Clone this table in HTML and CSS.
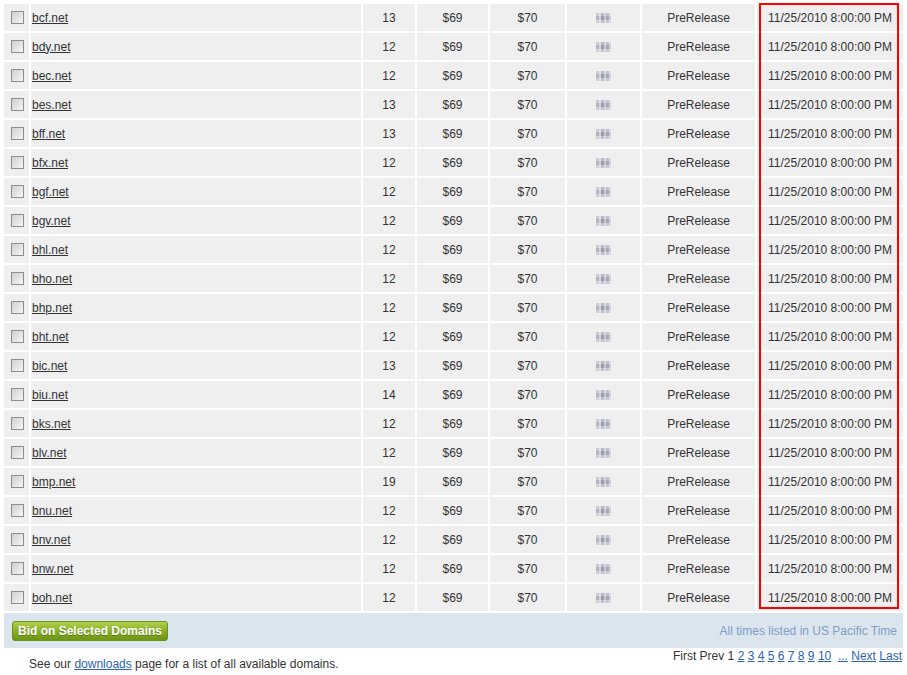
FILE: index.html
```html
<!DOCTYPE html>
<html lang="en">
<head>
  <meta charset="UTF-8">
  <title>Domain Auctions</title>
  <link rel="stylesheet" href="styles.css">
</head>
<body>
  <div class="page">
    <table class="domains">
      <colgroup>
        <col class="c-check"><col class="c-name"><col class="c-len"><col class="c-p1">
        <col class="c-p2"><col class="c-mask"><col class="c-status"><col class="c-date">
      </colgroup>
      <tbody>
        <tr><td><input type="checkbox"></td><td class="name"><a href="#">bcf.net</a></td><td>13</td><td>$69</td><td>$70</td><td><span class="mask"></span></td><td>PreRelease</td><td>11/25/2010 8:00:00 PM</td></tr>
        <tr><td><input type="checkbox"></td><td class="name"><a href="#">bdy.net</a></td><td>12</td><td>$69</td><td>$70</td><td><span class="mask"></span></td><td>PreRelease</td><td>11/25/2010 8:00:00 PM</td></tr>
        <tr><td><input type="checkbox"></td><td class="name"><a href="#">bec.net</a></td><td>12</td><td>$69</td><td>$70</td><td><span class="mask"></span></td><td>PreRelease</td><td>11/25/2010 8:00:00 PM</td></tr>
        <tr><td><input type="checkbox"></td><td class="name"><a href="#">bes.net</a></td><td>13</td><td>$69</td><td>$70</td><td><span class="mask"></span></td><td>PreRelease</td><td>11/25/2010 8:00:00 PM</td></tr>
        <tr><td><input type="checkbox"></td><td class="name"><a href="#">bff.net</a></td><td>13</td><td>$69</td><td>$70</td><td><span class="mask"></span></td><td>PreRelease</td><td>11/25/2010 8:00:00 PM</td></tr>
        <tr><td><input type="checkbox"></td><td class="name"><a href="#">bfx.net</a></td><td>12</td><td>$69</td><td>$70</td><td><span class="mask"></span></td><td>PreRelease</td><td>11/25/2010 8:00:00 PM</td></tr>
        <tr><td><input type="checkbox"></td><td class="name"><a href="#">bgf.net</a></td><td>12</td><td>$69</td><td>$70</td><td><span class="mask"></span></td><td>PreRelease</td><td>11/25/2010 8:00:00 PM</td></tr>
        <tr><td><input type="checkbox"></td><td class="name"><a href="#">bgv.net</a></td><td>12</td><td>$69</td><td>$70</td><td><span class="mask"></span></td><td>PreRelease</td><td>11/25/2010 8:00:00 PM</td></tr>
        <tr><td><input type="checkbox"></td><td class="name"><a href="#">bhl.net</a></td><td>12</td><td>$69</td><td>$70</td><td><span class="mask"></span></td><td>PreRelease</td><td>11/25/2010 8:00:00 PM</td></tr>
        <tr><td><input type="checkbox"></td><td class="name"><a href="#">bho.net</a></td><td>12</td><td>$69</td><td>$70</td><td><span class="mask"></span></td><td>PreRelease</td><td>11/25/2010 8:00:00 PM</td></tr>
        <tr><td><input type="checkbox"></td><td class="name"><a href="#">bhp.net</a></td><td>12</td><td>$69</td><td>$70</td><td><span class="mask"></span></td><td>PreRelease</td><td>11/25/2010 8:00:00 PM</td></tr>
        <tr><td><input type="checkbox"></td><td class="name"><a href="#">bht.net</a></td><td>12</td><td>$69</td><td>$70</td><td><span class="mask"></span></td><td>PreRelease</td><td>11/25/2010 8:00:00 PM</td></tr>
        <tr><td><input type="checkbox"></td><td class="name"><a href="#">bic.net</a></td><td>13</td><td>$69</td><td>$70</td><td><span class="mask"></span></td><td>PreRelease</td><td>11/25/2010 8:00:00 PM</td></tr>
        <tr><td><input type="checkbox"></td><td class="name"><a href="#">biu.net</a></td><td>14</td><td>$69</td><td>$70</td><td><span class="mask"></span></td><td>PreRelease</td><td>11/25/2010 8:00:00 PM</td></tr>
        <tr><td><input type="checkbox"></td><td class="name"><a href="#">bks.net</a></td><td>12</td><td>$69</td><td>$70</td><td><span class="mask"></span></td><td>PreRelease</td><td>11/25/2010 8:00:00 PM</td></tr>
        <tr><td><input type="checkbox"></td><td class="name"><a href="#">blv.net</a></td><td>12</td><td>$69</td><td>$70</td><td><span class="mask"></span></td><td>PreRelease</td><td>11/25/2010 8:00:00 PM</td></tr>
        <tr><td><input type="checkbox"></td><td class="name"><a href="#">bmp.net</a></td><td>19</td><td>$69</td><td>$70</td><td><span class="mask"></span></td><td>PreRelease</td><td>11/25/2010 8:00:00 PM</td></tr>
        <tr><td><input type="checkbox"></td><td class="name"><a href="#">bnu.net</a></td><td>12</td><td>$69</td><td>$70</td><td><span class="mask"></span></td><td>PreRelease</td><td>11/25/2010 8:00:00 PM</td></tr>
        <tr><td><input type="checkbox"></td><td class="name"><a href="#">bnv.net</a></td><td>12</td><td>$69</td><td>$70</td><td><span class="mask"></span></td><td>PreRelease</td><td>11/25/2010 8:00:00 PM</td></tr>
        <tr><td><input type="checkbox"></td><td class="name"><a href="#">bnw.net</a></td><td>12</td><td>$69</td><td>$70</td><td><span class="mask"></span></td><td>PreRelease</td><td>11/25/2010 8:00:00 PM</td></tr>
        <tr><td><input type="checkbox"></td><td class="name"><a href="#">boh.net</a></td><td>12</td><td>$69</td><td>$70</td><td><span class="mask"></span></td><td>PreRelease</td><td>11/25/2010 8:00:00 PM</td></tr>
      </tbody>
      <tfoot>
        <tr>
          <td colspan="8" class="actions">
            <div class="actions-row">
              <button class="bid-btn">Bid on Selected Domains</button>
              <span class="tz-note">All times listed in US Pacific Time</span>
            </div>
          </td>
        </tr>
      </tfoot>
    </table>

    <!-- highlight round the date column -->
    <div class="highlight"></div>

    <div class="below">
      <p class="note">See our <a href="#">downloads</a> page for a list of all available domains.</p>
      <div class="pager">
        First Prev 1 <a href="#">2</a> <a href="#">3</a> <a href="#">4</a> <a href="#">5</a> <a href="#">6</a> <a href="#">7</a> <a href="#">8</a> <a href="#">9</a> <a href="#">10</a>&nbsp; <a href="#">...</a> <a href="#">Next</a> <a href="#">Last</a>
      </div>
    </div>
  </div>
</body>
</html>
```

FILE: styles.css
```css
/* base */
body {
  margin: 0;
  font-family: "Liberation Sans", Arial, sans-serif;
  font-size: 12px;
  color: #333;
  background: #fff;
}
a {
  color: #2b62b2;
}

.page {
  position: relative;
  width: 907px;
  padding-top: 2px;
}

/* domain table */
.domains {
  margin-left: 2px;
  border-collapse: separate;
  border-spacing: 2px;
  table-layout: fixed;
  width: 903px;
}
.c-check { width: 25px; }
.c-name { width: 330px; }
.c-len { width: 52px; }
.c-p1 { width: 71px; }
.c-p2 { width: 75px; }
.c-mask { width: 73px; }
.c-status { width: 113px; }
.c-date { width: 146px; }

.domains tbody td {
  height: 27px;
  padding: 0;
  background: #efefef;
  text-align: center;
  vertical-align: middle;
  white-space: nowrap;
}
.domains td.name {
  text-align: left;
  padding-left: 1px;
}
.domains td.name a {
  color: #333;
}

/* old style checkbox */
.domains input[type="checkbox"] {
  appearance: none;
  -webkit-appearance: none;
  display: block;
  width: 13px;
  height: 13px;
  margin: 0 0 0 7px;
  border: 1px solid #8e8e8e;
  background: linear-gradient(135deg, #cfcfcf, #f6f6f6);
  box-sizing: border-box;
}

/* blurred value */
.mask {
  display: inline-block;
  width: 15px;
  height: 10px;
  vertical-align: middle;
  background:
    linear-gradient(180deg, rgba(255,255,255,0.3) 0 3px, transparent 3px 7px, rgba(240,240,245,0.45) 7px),
    linear-gradient(90deg, #b4b4be 0 3px, #d2d3dc 3px 5px, #9c9dab 5px 8px, #c6c8d2 8px 10px, #a6a8b6 10px 13px, #ccced8 13px 15px);
  filter: blur(0.7px);
}

/* bottom action bar */
.domains td.actions {
  height: 35px;
  padding: 0 6px 0 8px;
  background: #dbe5ee;
}
.actions-row {
  display: flex;
  justify-content: space-between;
  align-items: center;
}
.bid-btn {
  height: 20px;
  width: 156px;
  padding: 0;
  font-family: inherit;
  font-size: 12px;
  font-weight: bold;
  color: #fff;
  text-shadow: 0 1px 0 #5a7d10;
  background: linear-gradient(#b1cf4c, #86ad23 55%, #6f9615);
  border: 1px solid #6b9219;
  border-radius: 3px;
  cursor: pointer;
}
.tz-note {
  color: #7f9ec6;
}

/* red marker */
.highlight {
  position: absolute;
  left: 759px;
  top: 3px;
  width: 140px;
  height: 606px;
  border: 2px solid #f00;
  box-sizing: border-box;
}

/* under the table */
.below {
  display: flex;
  justify-content: space-between;
  align-items: flex-start;
}
.note {
  margin: 7px 0 0 29px;
}
.pager {
  margin-right: 5px;
  margin-top: -1px;
}
```
